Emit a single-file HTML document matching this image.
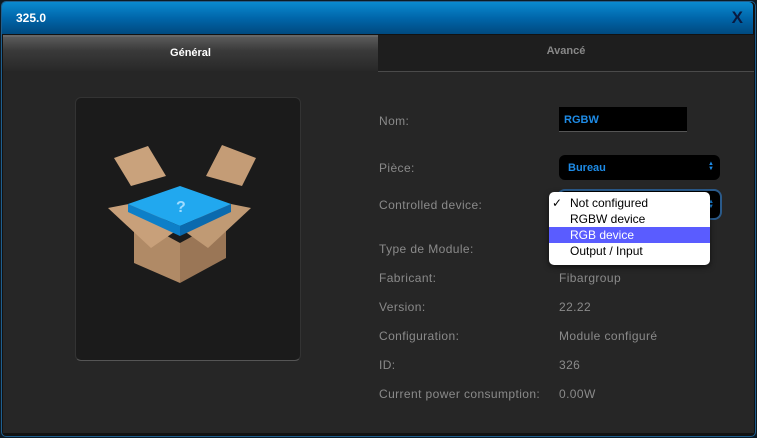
<!DOCTYPE html>
<html><head><meta charset="utf-8"><style>
*{margin:0;padding:0;box-sizing:border-box}
body{width:757px;height:438px;background:#0d1a24;font-family:"Liberation Sans",sans-serif;position:relative;overflow:hidden}
.win{position:absolute;left:1px;top:1px;width:755px;height:436px;background:#121212;border-radius:5px;border:1px solid #1f5f8f}
.title{position:absolute;left:2px;top:2px;width:751px;height:32px;background:linear-gradient(#0a8ad0,#0066aa 50%,#00497f);border-radius:4px 4px 0 0}
.title span{position:absolute;left:14px;top:9px;color:#fff;font-size:12px;font-weight:bold}
.title b{position:absolute;right:10px;top:6px;color:#0a1a40;font-size:17px;font-family:"Liberation Sans",sans-serif}
.content{position:absolute;left:3px;top:35px;width:751px;height:398px;background:#262626}
.tab1{position:absolute;left:3px;top:35px;width:375px;height:36px;background:linear-gradient(#5a5a5a,#3a3a3a 40%,#282828);border-top:2px solid #666;color:#fff;font-weight:bold;font-size:11px;text-align:center;line-height:32px}
.tab2{position:absolute;left:378px;top:35px;width:376px;height:37px;background:#1e1e1e;border-bottom:1px solid #4a4a4a;color:#888;font-weight:bold;font-size:11px;text-align:center;line-height:32px}
.panel{position:absolute;left:75px;top:97px;width:226px;height:264px;background:#1b1b1b;border:1px solid #333;border-bottom-color:#555;border-radius:6px}
.lbl{position:absolute;left:379px;color:#8a8a8a;font-size:12px;letter-spacing:0.4px}
.val{position:absolute;left:559px;color:#8a8a8a;font-size:12px;letter-spacing:0.4px}
.inp{position:absolute;left:559px;top:107px;width:128px;height:25px;background:#000;border-bottom:1px solid #555;color:#1e8be6;font-weight:bold;font-size:11px;padding:7px 5px}
.sel{position:absolute;left:559px;width:161px;height:25px;background:#000;border-radius:6px;color:#1e8be6;font-weight:bold;font-size:11px;padding:7px 9px}
.arr{position:absolute;right:6px;top:7px;color:#1e8be6;font-size:6px;line-height:5px}
.menu{position:absolute;left:549px;top:192px;width:161px;height:73px;background:#fff;border-radius:5px;box-shadow:0 2px 6px rgba(0,0,0,.6);font-size:12px;color:#000}
.it{position:absolute;left:0;width:161px;height:16px;padding-left:21px;line-height:16px}
</style></head><body>
<div class="win"></div>
<div class="title"><span>325.0</span><b>X</b></div>
<div class="content"></div>
<div class="tab1">Général</div>
<div class="tab2">Avancé</div>
<div class="panel">
<svg width="226" height="264" viewBox="0 0 226 264">
<polygon points="58,120 104,145 104,185 58,165" fill="#b08a66"/>
<polygon points="104,145 150,120 150,160 104,185" fill="#9a7656"/>
<polygon points="38,60 72,48 90,78 55,88" fill="#c9a27c"/>
<polygon points="130,78 146,47 180,60 166,88" fill="#c49c76"/>
<polygon points="32,110 58,105 104,130 75,150" fill="#c8a07a"/>
<polygon points="104,130 150,105 175,110 132,150" fill="#c09a74"/>
<polygon points="52,106 104,88 155,106 104,128" fill="#21a8ef"/>
<polygon points="52,106 104,128 104,138 52,114" fill="#0d7fc8"/>
<polygon points="104,128 155,106 155,114 104,138" fill="#0a6aae"/>
<text x="100" y="114" fill="#9fdcff" font-size="16" font-weight="bold" font-family="Liberation Sans">?</text>
</svg>
</div>
<div class="lbl" style="top:114px">Nom:</div>
<div class="inp">RGBW</div>
<div class="lbl" style="top:161px">Pièce:</div>
<div class="sel" style="top:155px">Bureau<div class="arr">▲<br>▼</div></div>
<div class="lbl" style="top:198px">Controlled device:</div>
<div class="sel" style="top:191px;height:27px;box-shadow:0 0 0 2px #2a5a8a"><div class="arr" style="top:9px">▲<br>▼</div></div>
<div class="lbl" style="top:242px">Type de Module:</div>
<div class="lbl" style="top:271px">Fabricant:</div><div class="val" style="top:271px">Fibargroup</div>
<div class="lbl" style="top:300px">Version:</div><div class="val" style="top:300px">22.22</div>
<div class="lbl" style="top:329px">Configuration:</div><div class="val" style="top:329px">Module configuré</div>
<div class="lbl" style="top:358px">ID:</div><div class="val" style="top:358px">326</div>
<div class="lbl" style="top:387px">Current power consumption:</div><div class="val" style="top:387px">0.00W</div>
<div class="menu">
<div class="it" style="top:3px"><span style="position:absolute;left:3px">✓</span>Not configured</div>
<div class="it" style="top:19px">RGBW device</div>
<div class="it" style="top:35px;background:#5a5cff;color:#fff">RGB device</div>
<div class="it" style="top:51px">Output / Input</div>
</div>
</body></html>
